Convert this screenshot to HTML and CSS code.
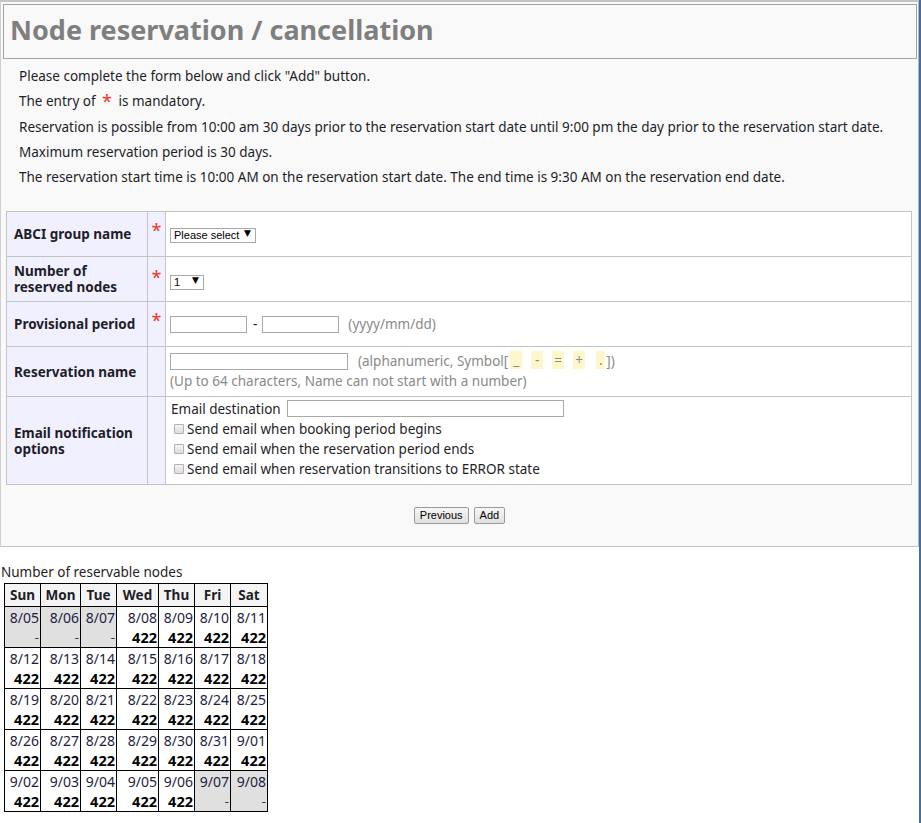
FILE: index.html
```html
<!DOCTYPE html>
<html>
<head>
<meta charset="utf-8">
<link rel="stylesheet" href="styles.css">
</head>
<body>
<div class="panel">
  <div class="title-box"><h1 class="title">Node reservation / cancellation</h1></div>
  <div class="intro">
    <p>Please complete the form below and click "Add" button.</p>
    <p>The entry of <span class="req">*</span> is mandatory.</p>
    <p>Reservation is possible from 10:00 am 30 days prior to the reservation start date until 9:00 pm the day prior to the reservation start date.</p>
    <p>Maximum reservation period is 30 days.</p>
    <p>The reservation start time is 10:00 AM on the reservation start date. The end time is 9:30 AM on the reservation end date.</p>
  </div>
  <table class="form">
    <tr class="r1">
      <th>ABCI group name</th>
      <td class="star"><span class="req">*</span></td>
      <td class="val"><span class="sel"><select class="s-group"><option>Please select</option></select></span></td>
    </tr>
    <tr class="r2">
      <th>Number of<br>reserved nodes</th>
      <td class="star"><span class="req">*</span></td>
      <td class="val"><span class="sel"><select class="s-num"><option>1</option></select></span></td>
    </tr>
    <tr class="r3">
      <th>Provisional period</th>
      <td class="star"><span class="req">*</span></td>
      <td class="val"><input class="date" type="text"><span class="dash">-</span><input class="date" type="text"><span class="hint fmt">(yyyy/mm/dd)</span></td>
    </tr>
    <tr class="r4">
      <th>Reservation name</th>
      <td class="star"></td>
      <td class="val">
        <div class="line"><input class="name" type="text"><span class="hint sym">(alphanumeric, Symbol[<span class="k">_</span><span class="k">-</span><span class="k">=</span><span class="k">+</span><span class="k dot">.</span>])</span></div>
        <div class="hint">(Up to 64 characters, Name can not start with a number)</div>
      </td>
    </tr>
    <tr class="r5">
      <th>Email notification<br>options</th>
      <td class="star"></td>
      <td class="val">
        <div class="email-line">Email destination<input class="email" type="text"></div>
        <label class="chk"><input type="checkbox">Send email when booking period begins</label>
        <label class="chk"><input type="checkbox">Send email when the reservation period ends</label>
        <label class="chk"><input type="checkbox">Send email when reservation transitions to ERROR state</label>
      </td>
    </tr>
  </table>
  <div class="buttons"><button class="btn">Previous</button><button class="btn">Add</button></div>
</div>

<div class="cal-wrap">
  <div class="cal-caption">Number of reservable nodes</div>
  <table class="cal">
    <tr><th class="c1">Sun</th><th class="c2">Mon</th><th class="c3">Tue</th><th class="c4">Wed</th><th class="c5">Thu</th><th class="c6">Fri</th><th class="c7">Sat</th></tr>
    <tr>
      <td class="off">8/05<b>-</b></td><td class="off">8/06<b>-</b></td><td class="off">8/07<b>-</b></td>
      <td>8/08<b>422</b></td><td>8/09<b>422</b></td><td>8/10<b>422</b></td><td>8/11<b>422</b></td>
    </tr>
    <tr>
      <td>8/12<b>422</b></td><td>8/13<b>422</b></td><td>8/14<b>422</b></td><td>8/15<b>422</b></td><td>8/16<b>422</b></td><td>8/17<b>422</b></td><td>8/18<b>422</b></td>
    </tr>
    <tr>
      <td>8/19<b>422</b></td><td>8/20<b>422</b></td><td>8/21<b>422</b></td><td>8/22<b>422</b></td><td>8/23<b>422</b></td><td>8/24<b>422</b></td><td>8/25<b>422</b></td>
    </tr>
    <tr>
      <td>8/26<b>422</b></td><td>8/27<b>422</b></td><td>8/28<b>422</b></td><td>8/29<b>422</b></td><td>8/30<b>422</b></td><td>8/31<b>422</b></td><td>9/01<b>422</b></td>
    </tr>
    <tr>
      <td>9/02<b>422</b></td><td>9/03<b>422</b></td><td>9/04<b>422</b></td><td>9/05<b>422</b></td><td>9/06<b>422</b></td><td class="off">9/07<b>-</b></td><td class="off">9/08<b>-</b></td>
    </tr>
  </table>
</div>
</body>
</html>
```

FILE: styles.css
```css
html { background: #fff; }
body {
  margin: 0;
  width: 919px;
  min-height: 823px;
  border-right: 2px solid #3f6fa6;
  font-family: "Noto Sans", "DejaVu Sans", sans-serif;
  font-size: 13.5px;
  color: #1e1e28;
  background: #fff;
}
.panel {
  background: #f9f9f9;
  border-top: 2px solid #c4c4c4;
  border-left: 1px solid #cfcfcf;
  border-right: 1px solid #b8b8b8;
  border-bottom: 1px solid #c4c4c4;
  padding: 2px 0 0 0;
  box-sizing: border-box;
  height: 547px;
}
.title-box {
  margin: 0 0 0 2px;
  width: 914px;
  height: 55px;
  border: 1px solid #a2a2a2;
  box-sizing: border-box;
  display: flex;
  align-items: center;
}
.title {
  margin: -4px 0 0 6px;
  font-size: 27px;
  font-weight: bold;
  color: #7f7f7f;
  line-height: 1;
}
.intro {
  padding: 5px 0 0 18px;
}
.intro p {
  margin: 0;
  line-height: 25.3px;
}
.req {
  color: #f5302a;
  font-size: 18px;
  line-height: 1;
  vertical-align: -2px;
}
.intro .req { margin: 0 3px; }

.form {
  margin: 21px 0 0 5px;
  width: 906px;
  border-collapse: collapse;
  border: 1px solid #c4c4c4;
  background: #fff;
}
.form th, .form td {
  border: 1px solid #c4c4c4;
  padding: 0;
}
.form th {
  width: 133px;
  padding-left: 7px;
  text-align: left;
  font-weight: bold;
  background: #f0f0ff;
  line-height: 16px;
}
.form td.star {
  width: 17px;
  background: #f0f0ff;
  text-align: center;
  vertical-align: middle;
}
.form td.star .req { position: relative; top: -4px; }
.r2 td.star .req { top: -2px; }
.form td.val {
  padding-left: 4px;
  vertical-align: middle;
}
.r1, .r2, .r3 { height: 45px; }
.r4 { height: 50px; }
.r5 { height: 88px; }

.sel { position: relative; display: inline-block; vertical-align: middle; }
.sel select {
  appearance: none;
  -webkit-appearance: none;
  border: 1px solid #a9a9a9;
  background: #fff;
  font-family: "Liberation Sans", Arial, sans-serif;
  font-size: 11px;
  color: #000;
  height: 15px;
  padding: 0 0 0 3px;
  margin: 0;
  border-radius: 0;
  line-height: 13px;
}
.sel::after {
  content: "\25BC";
  position: absolute;
  right: 5px;
  top: 1px;
  font-size: 9px;
  line-height: 13px;
  color: #000;
  pointer-events: none;
}
.s-group { width: 86px; }
.s-num { width: 34px; }
.r1 .sel { top: -1px; }
.r2 .sel { top: 1px; }

input[type=text] {
  border: 1px solid #a9a9a9;
  background: #fff;
  height: 17px;
  box-sizing: border-box;
  padding: 0;
  margin: 0;
  vertical-align: middle;
  border-radius: 0;
}
.r3 .val > * { position: relative; top: -1px; }
.date { width: 77px; }
.dash { margin: 0 5px 0 6px; vertical-align: middle; }
.hint { color: #8a8a8a; }
.fmt { margin-left: 9px; vertical-align: middle; }
.name { width: 178px; }
.line { display: flex; align-items: center; height: 20px; margin-top: -1px; }
.sym { margin-left: 10px; }
.k {
  display: inline-block;
  background: #fff7cc;
  width: 12px;
  margin-right: 9px;
  text-align: center;
  line-height: 18px;
  vertical-align: top;
}
.k:first-child { margin-left: 2px; }
.k.dot { width: 9px; margin-left: 2px; margin-right: 1px; }
.r4 .hint:last-child { line-height: 20px; }

.email-line { display: flex; align-items: center; height: 20px; margin: -4px 0 0 1px; }
.email { width: 277px; margin-left: 6px !important; }
.chk {
  display: flex;
  align-items: center;
  height: 20px;
  margin-left: 4px;
}
.chk input {
  appearance: none;
  -webkit-appearance: none;
  width: 10px;
  height: 10px;
  margin: 0 3px 0 0;
  border: 1px solid #b0b0b0;
  border-radius: 1px;
  background: linear-gradient(#f4f4f4, #dcdcdc);
  box-sizing: border-box;
}

.buttons {
  display: flex;
  justify-content: center;
  gap: 5px;
  margin-top: 22px;
}
.btn {
  font-family: "Liberation Sans", Arial, sans-serif;
  font-size: 11px;
  color: #000;
  height: 17px;
  padding: 0 5px;
  border: 1px solid #9a9a9a;
  border-radius: 2px;
  background: linear-gradient(#f6f6f6, #e0e0e0);
  line-height: 15px;
}

.cal-wrap { padding: 16px 0 0 0; }
.cal-caption { line-height: 18px; margin-left: 1px; font-size: 13.5px; }
.cal {
  margin: 2px 0 0 4px;
  border-collapse: collapse;
  border: 1px solid #000;
}
.cal th {
  border: 1px solid #000;
  background: #f4f4f4;
  font-weight: bold;
  height: 22px;
  padding: 0;
  text-align: center;
  font-size: 13.5px;
}
.c1 { width: 35px; } .c2 { width: 39px; } .c3 { width: 35px; } .c4 { width: 41px; }
.c5 { width: 35px; } .c6 { width: 35px; } .c7 { width: 36px; }
.cal td {
  border: 1px solid #000;
  text-align: right;
  padding: 1px 1px 0 0;
  height: 39px;
  box-sizing: border-box;
  vertical-align: top;
  line-height: 19px;
  color: #1e1e40;
  font-size: 14px;
}
.cal td b {
  display: block;
  font-size: 14.5px;
  color: #000;
  line-height: 20px;
}
.cal td.off { background: #e0e0e0; }
.cal td.off b { font-weight: normal; font-size: 13px; color: #333; }
```
